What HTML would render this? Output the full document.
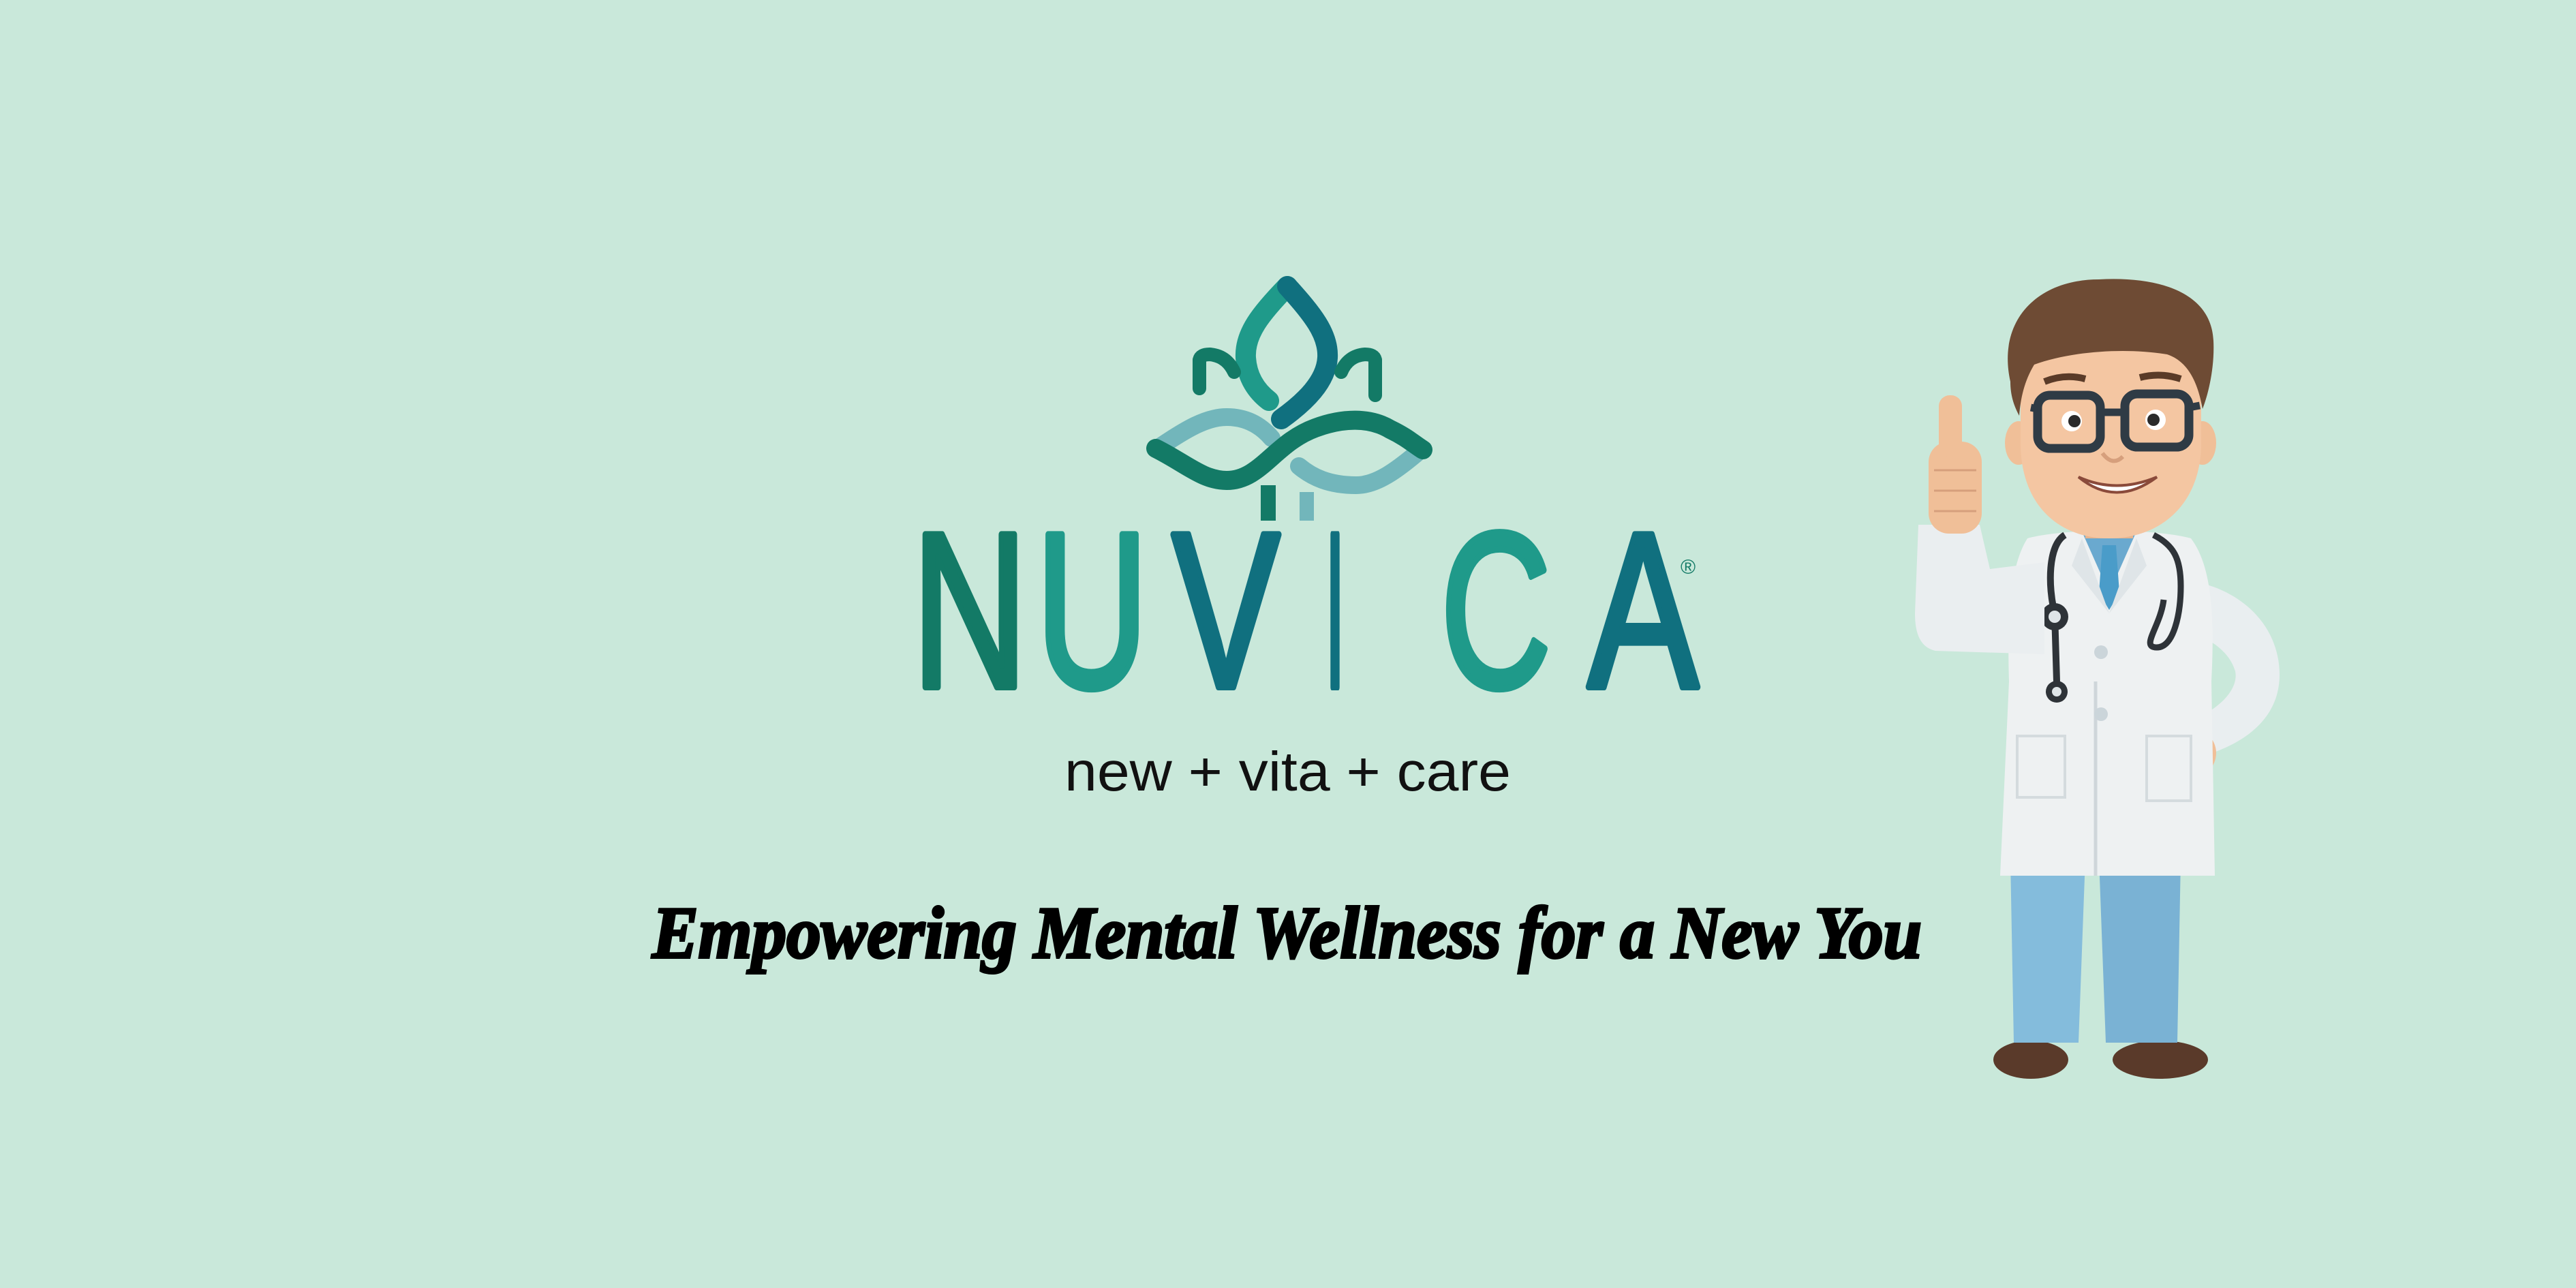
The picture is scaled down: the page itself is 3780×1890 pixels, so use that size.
<!DOCTYPE html>
<html><head><meta charset="utf-8">
<style>
html,body{margin:0;padding:0;background:#c9e8da;}
svg{display:block}
</style></head>
<body>
<svg width="3780" height="1890" viewBox="0 0 3780 1890" xmlns="http://www.w3.org/2000/svg">
<rect width="3780" height="1890" fill="#c9e8da"/>

<!-- Logo mark -->
<g fill="none" stroke-linecap="round" stroke-linejoin="round">
  <path d="M1889 420 C1850 460 1826 490 1828 525 C1830 555 1845 575 1862 588" stroke="#1f9a8a" stroke-width="30"/>
  <path d="M1889 420 C1925 460 1950 490 1948 525 C1946 560 1915 590 1880 615" stroke="#10707f" stroke-width="30"/>
  <path d="M1760 570 L1760 528 Q1762 520 1775 520 Q1800 522 1811 546" stroke="#137a66" stroke-width="20"/>
  <path d="M2018 580 L2018 528 Q2016 520 2003 520 Q1978 522 1968 546" stroke="#137a66" stroke-width="20"/>
  <path d="M1700 657 C1740 630 1770 612 1800 612 C1835 612 1855 630 1866 643" stroke="#72b6bb" stroke-width="26"/>
  <path d="M2085 660 C2050 690 2020 712 1990 712 C1950 712 1925 700 1906 684" stroke="#72b6bb" stroke-width="26"/>
  <path d="M1696 658 C1740 680 1765 705 1800 705 C1850 705 1870 650 1930 628 C1970 613 2010 612 2040 630 C2065 642 2075 652 2088 660" stroke="#137a66" stroke-width="28"/>
</g>
<rect x="1850" y="712" width="22" height="52" fill="#137a66"/>
<rect x="1907" y="722" width="21" height="42" fill="#72b6bb"/>

<!-- NUVICA -->
<g font-family="Liberation Sans, sans-serif" font-size="325" stroke-width="10" stroke-linejoin="round">
  <text x="1338" y="1008" fill="#137a66" stroke="#137a66" textLength="170" lengthAdjust="spacingAndGlyphs">N</text>
  <text x="1520" y="1008" fill="#1f9a8a" stroke="#1f9a8a" textLength="165" lengthAdjust="spacingAndGlyphs">U</text>
  <text x="1720" y="1008" fill="#10707f" stroke="#10707f" textLength="158" lengthAdjust="spacingAndGlyphs">V</text>
  <text x="1944" y="1008" fill="#10707f" stroke="#10707f" textLength="30" lengthAdjust="spacingAndGlyphs">I</text>
  <text x="2114" y="1008" fill="#1f9a8a" stroke="#1f9a8a" textLength="162" lengthAdjust="spacingAndGlyphs">C</text>
  <text x="2330" y="1008" fill="#10707f" stroke="#10707f" textLength="162" lengthAdjust="spacingAndGlyphs">A</text>
</g>
<text x="2466" y="842" font-family="Liberation Sans, sans-serif" font-size="30" fill="#137a66">®</text>

<!-- tagline -->
<text x="1562" y="1160" font-family="Liberation Sans, sans-serif" font-size="82" fill="#111" textLength="655" lengthAdjust="spacingAndGlyphs">new + vita + care</text>

<!-- heading -->
<text x="957" y="1405" font-family="Liberation Serif, serif" font-weight="bold" font-style="italic" font-size="108" fill="#000" stroke="#000" stroke-width="4" textLength="1863" lengthAdjust="spacingAndGlyphs">Empowering Mental Wellness for a New You</text>

<!-- Doctor -->
<g>
  <ellipse cx="2980" cy="1555" rx="55" ry="28" fill="#5a3a2a"/>
  <ellipse cx="3170" cy="1555" rx="70" ry="28" fill="#5a3a2a"/>
  <path d="M2950 1260 L3060 1260 L3050 1530 L2955 1530 Z" fill="#84bcdc"/>
  <path d="M3080 1260 L3200 1260 L3195 1530 L3090 1530 Z" fill="#7ab2d4"/>
  <path d="M3200 850 C3290 860 3345 920 3345 990 C3345 1050 3300 1090 3230 1110 L3210 1060 C3260 1040 3285 1010 3280 985 C3270 950 3230 930 3200 925 Z" fill="#e9eef0"/>
  <ellipse cx="3212" cy="1105" rx="40" ry="38" fill="#f0bf98"/>
  <path d="M2975 790 C3030 775 3160 775 3215 790 C3245 830 3250 900 3245 1000 L3250 1285 L2935 1285 L2948 1000 C2945 900 2950 830 2975 790 Z" fill="#eef1f2"/>
  <path d="M3075 1000 L3075 1285" stroke="#cfd6da" stroke-width="5"/>
  <path d="M3055 780 L3135 780 L3095 870 Z" fill="#6aa9cf"/>
  <path d="M3085 800 L3105 800 L3110 870 L3095 895 L3080 870 Z" fill="#4a9cc9"/>
  <path d="M3055 790 L3040 830 L3095 900 Z" fill="#dfe5e8"/>
  <path d="M3135 790 L3150 830 L3095 900 Z" fill="#dfe5e8"/>
  <circle cx="3083" cy="957" r="10" fill="#cbd5da"/>
  <circle cx="3083" cy="1048" r="10" fill="#cbd5da"/>
  <path d="M2960 1080 L3030 1080 L3030 1170 L2960 1170 Z" fill="none" stroke="#d4dbde" stroke-width="4"/>
  <path d="M3150 1080 L3215 1080 L3215 1175 L3150 1175 Z" fill="none" stroke="#d4dbde" stroke-width="4"/>
  <path d="M3030 785 C3005 800 3005 860 3015 900 L3018 1000" fill="none" stroke="#2e3338" stroke-width="10"/>
  <circle cx="3015" cy="905" r="20" fill="#2e3338"/><circle cx="3015" cy="905" r="9" fill="#dfe5e8"/>
  <circle cx="3018" cy="1015" r="16" fill="#2e3338"/><circle cx="3018" cy="1015" r="7" fill="#dfe5e8"/>
  <path d="M3160 785 C3190 800 3200 820 3200 860 C3200 900 3190 950 3165 950 C3140 950 3170 920 3175 880" fill="none" stroke="#2e3338" stroke-width="9"/>
  <path d="M2815 770 L2905 770 L2920 835 L3000 825 L3000 960 L2840 955 C2818 950 2810 930 2810 900 Z" fill="#eaeef0"/>
  <rect x="2830" y="648" width="78" height="135" rx="30" fill="#f0bf98"/>
  <rect x="2845" y="580" width="34" height="90" rx="16" fill="#f0bf98"/>
  <path d="M2838 690 H2900 M2838 720 H2900 M2838 750 H2900" stroke="#d69f7c" stroke-width="3"/>
  <rect x="3060" y="740" width="70" height="50" fill="#e8b48e"/>
  <ellipse cx="2962" cy="650" rx="20" ry="32" fill="#f0bf98"/>
  <ellipse cx="3232" cy="650" rx="20" ry="32" fill="#f0bf98"/>
  <path d="M2965 540 C2965 480 3230 480 3230 540 L3230 650 C3230 740 3170 790 3095 790 C3020 790 2965 740 2965 650 Z" fill="#f4c6a2"/>
  <path d="M2950 560 C2930 470 2990 410 3080 410 C3170 405 3245 430 3248 500 C3250 540 3240 580 3232 600 C3225 560 3210 530 3180 520 C3120 510 3040 515 2985 535 C2970 560 2965 585 2963 610 C2955 595 2950 580 2950 560 Z" fill="#6e4b34"/>
  <path d="M3000 560 Q3030 548 3060 556" stroke="#5a3b28" stroke-width="10" fill="none"/>
  <path d="M3140 554 Q3170 546 3200 556" stroke="#5a3b28" stroke-width="10" fill="none"/>
  <rect x="2990" y="580" width="92" height="78" rx="18" fill="none" stroke="#2f3b45" stroke-width="13"/>
  <rect x="3118" y="578" width="94" height="78" rx="18" fill="none" stroke="#2f3b45" stroke-width="13"/>
  <path d="M3082 605 L3118 605 M2980 598 L2990 600 M3212 598 L3228 595" stroke="#2f3b45" stroke-width="11"/>
  <circle cx="3040" cy="618" r="15" fill="#fff"/><circle cx="3044" cy="618" r="9" fill="#2a2a2a"/>
  <circle cx="3163" cy="616" r="15" fill="#fff"/><circle cx="3160" cy="616" r="9" fill="#2a2a2a"/>
  <path d="M3085 665 Q3100 685 3115 670" stroke="#d69f7c" stroke-width="6" fill="none"/>
  <path d="M3050 700 Q3105 745 3165 700 Q3105 725 3050 700 Z" fill="#fff" stroke="#8a4a3a" stroke-width="4"/>
</g>
</svg>
</body></html>
